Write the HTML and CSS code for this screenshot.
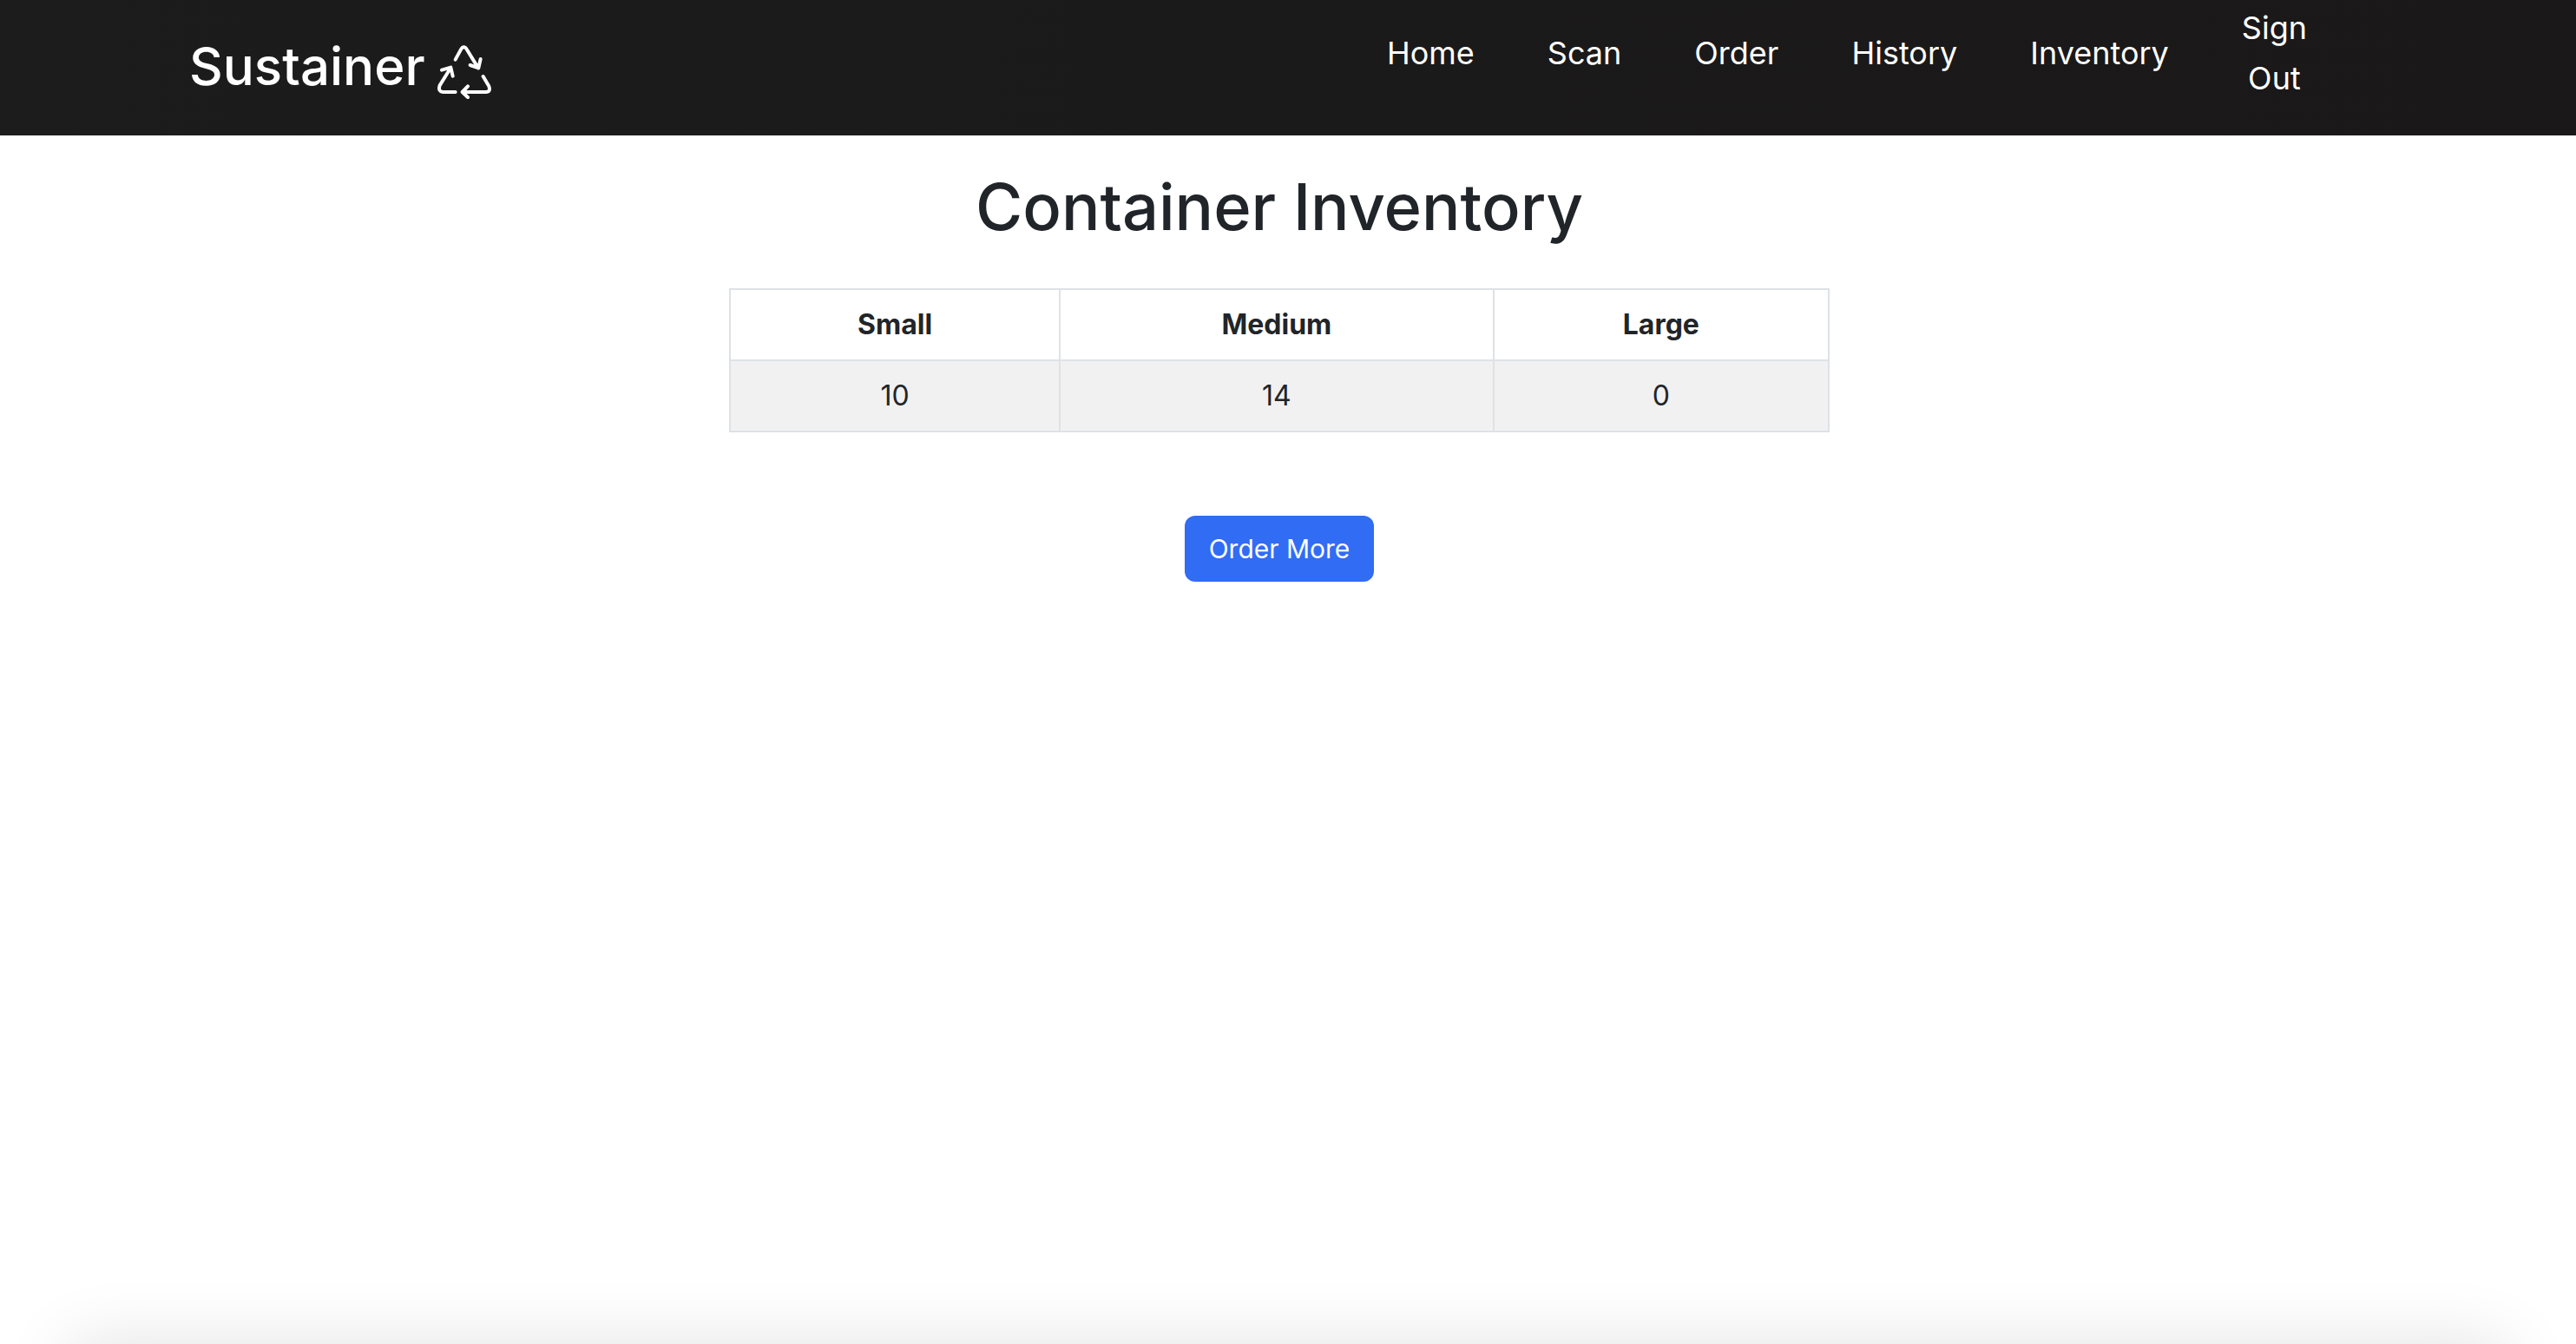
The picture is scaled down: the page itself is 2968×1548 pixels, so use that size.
FILE: index.html
```html
<!DOCTYPE html>
<html lang="en">
<head>
<meta charset="utf-8">
<meta name="viewport" content="width=device-width, initial-scale=1">
<title>Sustainer</title>
<link rel="stylesheet" href="styles.css">
</head>
<body>
<header class="navbar">
  <a class="brand" href="#">
    <span>Sustainer</span>
    <svg class="brand-icon" viewBox="36 39 186 186" aria-hidden="true">
      <path d="M98 89 L116 56 Q127 36 139 56 L177 118 M149 108 L178 118 L185 87"/>
      <path d="M98 201 H56 Q37 200 44 178 L82 117 M51 125 L82 116 L89 146"/>
      <path d="M194 147 L214 181 Q221 200 203 201 H124 M141 181 L122 201 L141 219"/>
    </svg>
  </a>
  <nav class="menu">
    <a href="#">Home</a>
    <a href="#">Scan</a>
    <a href="#">Order</a>
    <a href="#">History</a>
    <a href="#">Inventory</a>
    <a class="sign-out" href="#">Sign Out</a>
  </nav>
</header>
<main class="content">
  <h1>Container Inventory</h1>
  <table class="inventory">
    <colgroup><col class="col-small"><col class="col-medium"><col class="col-large"></colgroup>
    <thead>
      <tr><th scope="col">Small</th><th scope="col">Medium</th><th scope="col">Large</th></tr>
    </thead>
    <tbody>
      <tr><td>10</td><td>14</td><td>0</td></tr>
    </tbody>
  </table>
  <button class="order-button" type="button">Order More</button>
</main>
<div class="bottom-shade"></div>
</body>
</html>
```
FILE: styles.css
```css
* {
  box-sizing: border-box;
}

body {
  margin: 0;
  background: #fff;
  color: #212529;
  font-family: Inter, "Liberation Sans", sans-serif;
  font-size: 32px;
  line-height: 48px;
}

.navbar {
  display: flex;
  justify-content: space-between;
  align-items: flex-start;
  min-height: 156px;
  padding: 0 310px 0 218px;
  background: linear-gradient(90deg, #1c1c1c, #1a1818);
}

.navbar a {
  color: #fff;
  text-decoration: none;
}

.brand {
  display: flex;
  align-items: center;
  gap: 14px;
  padding-top: 28px;
  font-size: 60px;
  font-weight: 500;
  line-height: 96px;
}

.brand-icon {
  width: 62px;
  height: 62px;
  margin-top: 14px;
  fill: none;
  stroke: #fff;
  stroke-width: 12;
  stroke-linecap: round;
  stroke-linejoin: round;
}

.menu {
  display: flex;
  align-items: center;
  gap: 84px;
  padding-top: 3px;
  font-size: 36px;
  line-height: 58px;
  text-align: center;
}

.sign-out {
  width: min-content;
}

.content {
  display: flex;
  flex-direction: column;
  align-items: center;
  padding: 34px 20px 96px 0;
}

h1 {
  margin: 0;
  font-size: 74px;
  font-weight: 500;
  line-height: 96px;
}

.inventory {
  width: 43%;
  margin: 46px 0 96px;
  border-collapse: collapse;
  table-layout: fixed;
  text-align: center;
}

.inventory th,
.inventory td {
  padding: 16px;
  border: 2px solid #dee2e6;
}

.inventory th {
  font-weight: 700;
}

.inventory td {
  background: #f1f1f1;
}

.col-small {
  width: 30%;
}

.col-medium {
  width: 39.5%;
}

.col-large {
  width: 30.5%;
}

.order-button {
  padding: 14px 28px;
  border: 0;
  border-radius: 12px;
  background: #316cf4;
  color: #fff;
  font: inherit;
  font-size: 30px;
}

/* Soft shade rising from the lower edge of the window */
.bottom-shade {
  position: fixed;
  right: 80px;
  bottom: -80px;
  left: 80px;
  height: 80px;
  box-shadow: 0 0 80px rgba(0, 0, 0, 0.12);
  pointer-events: none;
}
```
